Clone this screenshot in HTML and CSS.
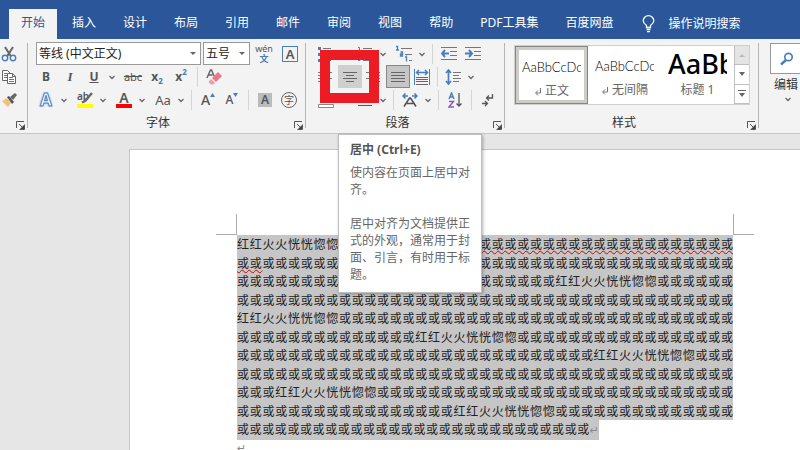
FILE: index.html
```
<!DOCTYPE html>
<html lang="zh-CN">
<head>
    <meta charset="UTF-8">
    <meta name="viewport" content="width=device-width, initial-scale=1.0">
    <title>文档</title>
    <link rel="stylesheet" href="styles.css">
</head>
<body>
<svg class="defs" aria-hidden="true">
    <symbol id="chev" viewBox="0 0 12 12"><path d="M3.500 5L6 7.500 8.500 5" fill="none" stroke="#666" stroke-width="1.300"/></symbol>
    <symbol id="launch" viewBox="0 0 9 9"><path d="M.5 7V.5H8M3 3l4 4M8.500 3.500v5h-5" fill="none" stroke="#555"/><path d="M8 4v4H4z" fill="#444"/></symbol>
    <symbol id="enter" viewBox="0 0 8 9"><path d="M6.500 1v5H2M4 3.500L1.500 6 4 8.500" fill="none" stroke="#777"/></symbol>
</svg>

<nav class="tabs">
    <a href="#" class="tab active">开始</a>
    <a href="#" class="tab">插入</a>
    <a href="#" class="tab">设计</a>
    <a href="#" class="tab">布局</a>
    <a href="#" class="tab">引用</a>
    <a href="#" class="tab">邮件</a>
    <a href="#" class="tab">审阅</a>
    <a href="#" class="tab">视图</a>
    <a href="#" class="tab">帮助</a>
    <a href="#" class="tab">PDF工具集</a>
    <a href="#" class="tab">百度网盘</a>
    <a href="#" class="tab search">
        <svg width="13" height="18" viewBox="0 0 13 18" fill="none" stroke="#fff" stroke-width="1.3"><path d="M4.500 12.500v-2C2.500 9 1.200 7.800 1.200 5.700a5.300 5 0 0 1 10.600 0c0 2.100-1.300 3.300-3.300 4.800v2zM4.500 14.500h4M5 16.700h3"/></svg>
        操作说明搜索
    </a>
</nav>

<div class="ribbon">
    <section class="group clipboard">
        <div class="row"><button class="btn narrow" aria-label="剪切"><svg width="16" height="16" viewBox="0 0 16 16" fill="none"><path d="M4 1l6 9.500M12 1L6 10.500" stroke="#666" stroke-width="2"/><circle cx="4" cy="12" r="2.700" stroke="#4a7ebb" stroke-width="1.400"/><circle cx="12" cy="12" r="2.700" stroke="#4a7ebb" stroke-width="1.400"/></svg></button></div>
        <div class="row"><button class="btn narrow" aria-label="复制"><svg width="16" height="16" viewBox="0 0 16 16" fill="#fff" stroke="#666"><path d="M1.500 1.500h5l3 3v7h-8z"/><path d="M3 4.500h3M3 6.500h3M3 8.500h3" stroke="#4a7ebb"/><path d="M6.500 4.500h5l3 3v7h-8z"/><path d="M11.500 4.500v3h3" fill="none"/><path d="M8 8.500h4M8 10.500h5M8 12.500h5" stroke="#4a7ebb"/></svg></button></div>
        <div class="row"><button class="btn narrow" aria-label="格式刷"><svg width="16" height="16" viewBox="0 0 16 16"><path d="M1 9l5-3 4 5-3 4z" fill="#edc180"/><path d="M6 5l2-1 5 6-2 2z" fill="#555"/><path d="M9 5l5-4 2 2-4 5z" fill="#666"/></svg></button></div>
        <div class="foot"><span></span><button class="launch" aria-label="剪贴板选项"><svg width="9" height="9"><use href="#launch"/></svg></button></div>
    </section>

    <section class="group font">
        <div class="row fields">
            <div class="combo family"><select aria-label="字体"><option>等线 (中文正文)</option></select></div>
            <div class="combo size"><select aria-label="字号"><option>五号</option></select></div>
            <button class="btn pinyin" aria-label="拼音指南"><span>wén</span><b>文</b></button>
            <button class="btn" aria-label="字符边框"><span class="boxed">A</span></button>
        </div>
        <div class="row">
            <div class="set">
                <button class="btn bold">B</button>
                <button class="btn italic">I</button>
                <button class="btn under">U</button>
                <button class="more" aria-label="下划线样式"><svg width="12" height="12"><use href="#chev"/></svg></button>
            </div>
            <div class="set">
                <button class="btn strike">abc</button>
                <button class="btn script">x<sub>2</sub></button>
                <button class="btn script">x<sup>2</sup></button>
            </div>
            <i class="sep"></i>
            <button class="btn" aria-label="清除格式"><svg width="16" height="16" viewBox="0 0 16 16"><path d="M1 9L4.500 1h1L8 7M2.500 6h4" fill="none" stroke="#666" stroke-width="1.500"/><path d="M6 9l6-6 4 4-6 6z" fill="#e8798b"/><path d="M5 10l4 4-2 1.500H5L2.500 13z" fill="#eb9aa7"/></svg></button>
        </div>
        <div class="row">
            <div class="set">
                <button class="btn effect">A</button>
                <button class="more" aria-label="文本效果"><svg width="12" height="12"><use href="#chev"/></svg></button>
            </div>
            <div class="set">
                <button class="btn marker" aria-label="突出显示"><svg width="18" height="18" viewBox="0 0 18 18"><text x="1" y="9" class="ab">ab</text><path d="M16 2l-7 8-3 1.500" fill="none" stroke="#666" stroke-width="2.400"/><path d="M1 13h16v4H1z" fill="#ff0"/></svg></button>
                <button class="more" aria-label="突出显示颜色"><svg width="12" height="12"><use href="#chev"/></svg></button>
            </div>
            <div class="set">
                <button class="btn" aria-label="字体颜色"><span class="colour">A</span></button>
                <button class="more" aria-label="选择字体颜色"><svg width="12" height="12"><use href="#chev"/></svg></button>
            </div>
            <div class="set">
                <button class="btn case">Aa</button>
                <button class="more" aria-label="更改大小写"><svg width="12" height="12"><use href="#chev"/></svg></button>
            </div>
            <i class="sep"></i>
            <div class="set">
                <button class="btn grow">A<svg width="5" height="4" viewBox="0 0 5 4"><path d="M0 4l2.500-4L5 4z" fill="#4a7ebb"/></svg></button>
                <button class="btn shrink">A<svg width="5" height="4" viewBox="0 0 5 4"><path d="M0 0h5L2.500 4z" fill="#4a7ebb"/></svg></button>
            </div>
            <i class="sep"></i>
            <div class="set">
                <button class="btn" aria-label="字符底纹"><span class="shaded">A</span></button>
                <button class="btn" aria-label="带圈字符"><span class="circled">字</span></button>
            </div>
        </div>
        <div class="foot"><span>字体</span><button class="launch" aria-label="字体选项"><svg width="9" height="9"><use href="#launch"/></svg></button></div>
    </section>

    <section class="group para">
        <div class="row">
            <div class="set">
                <button class="btn" aria-label="项目符号"><svg width="16" height="16" viewBox="0 0 16 16"><path d="M0 1h3v3H0zM0 7h3v3H0zM0 13h3v3H0z" fill="#4a7ebb"/><path d="M5 2.500h8M5 8.500h8M5 14.500h8" stroke="#777"/></svg></button>
                <button class="more" aria-label="项目符号库"><svg width="12" height="12"><use href="#chev"/></svg></button>
            </div>
            <div class="set">
                <button class="btn" aria-label="编号"><svg width="16" height="16" viewBox="0 0 16 16"><path d="M1 1.500h1.500V5M1 5h3M1 12.500h2v2H1" fill="none" stroke="#4a7ebb"/><path d="M6 2.500h9M6 8.500h9M6 14.500h9" stroke="#777"/></svg></button>
                <button class="more" aria-label="编号库"><svg width="12" height="12"><use href="#chev"/></svg></button>
            </div>
            <div class="set">
                <button class="btn" aria-label="多级列表"><svg width="18" height="18" viewBox="0 0 18 18"><path d="M1 1.500h1.500V5M1 5h3M5.500 7h2v4h-2V9h2M10 12h1.500v4.500M11.500 9.500v1" fill="none" stroke="#4a7ebb" stroke-width="1.300"/><path d="M6 3.500h11M10 9.500h7M14 15.500h3" stroke="#777"/></svg></button>
                <button class="more" aria-label="列表库"><svg width="12" height="12"><use href="#chev"/></svg></button>
            </div>
            <i class="sep"></i>
            <div class="set">
                <button class="btn" aria-label="减少缩进"><svg width="16" height="14" viewBox="0 0 16 14"><path d="M0 .5h16M9 4.500h7M9 8.500h7M0 12.500h16" stroke="#777"/><path d="M1 6.500h7M4 3L1 6.500 4 10" fill="none" stroke="#4a7ebb" stroke-width="2"/></svg></button>
                <button class="btn" aria-label="增加缩进"><svg width="16" height="14" viewBox="0 0 16 14"><path d="M0 .5h16M9 4.500h7M9 8.500h7M0 12.500h16" stroke="#777"/><path d="M0 6.500h7M4 3l3 3.500L4 10" fill="none" stroke="#4a7ebb" stroke-width="2"/></svg></button>
            </div>
        </div>
        <div class="row">
            <div class="set">
                <button class="btn" aria-label="左对齐"><svg width="16" height="12" viewBox="0 0 16 12" stroke="#777"><path d="M0 1.500h14M0 4.500h9M0 7.500h14M0 10.500h9"/></svg></button>
                <button class="btn hover" aria-label="居中"><svg width="16" height="12" viewBox="0 0 16 12" stroke="#666"><path d="M1 1.500h14M4 4.500h8M1 7.500h14M4 10.500h8"/></svg></button>
                <button class="btn" aria-label="右对齐"><svg width="16" height="12" viewBox="0 0 16 12" stroke="#777"><path d="M0 1.500h14M5 4.500h9M0 7.500h14M5 10.500h9"/></svg></button>
                <button class="btn pressed" aria-label="两端对齐"><svg width="16" height="12" viewBox="0 0 16 12" stroke="#666"><path d="M1 1.500h14M1 4.500h14M1 7.500h14M1 10.500h14"/></svg></button>
                <button class="btn" aria-label="分散对齐"><svg width="16" height="16" viewBox="0 0 16 16" fill="none"><path d="M.5 0v16M15.500 0v16" stroke="#4a7ebb"/><path d="M3 3.500h10M5 1L2.500 3.500 5 6M11 1l2.500 2.500L11 6" stroke="#4a7ebb" stroke-width="1.500"/><path d="M2 8.500h12M2 10.500h12M2 12.500h12M2 15.500h12" stroke="#666"/></svg></button>
            </div>
            <i class="sep tight"></i>
            <div class="set">
                <button class="btn" aria-label="行距"><svg width="16" height="16" viewBox="0 0 16 16" fill="none"><path d="M3.500 1v14M1 4l2.500-3L6 4M1 12l2.500 3L6 12" stroke="#4a7ebb" stroke-width="1.700"/><path d="M8 3.500h8M8 6.500h6M8 9.500h8M8 12.500h6" stroke="#777"/></svg></button>
                <button class="more" aria-label="行距选项"><svg width="12" height="12"><use href="#chev"/></svg></button>
            </div>
        </div>
        <div class="row">
            <div class="set">
                <button class="btn" aria-label="底纹"><svg width="16" height="16" viewBox="0 0 16 16"><path d="M3 8l5-6 5 6z" fill="#777"/><path d="M.5 12.500h15v3H.5z" fill="#fff" stroke="#888"/></svg></button>
                <button class="more" aria-label="底纹颜色"><svg width="12" height="12"><use href="#chev"/></svg></button>
            </div>
            <div class="set">
                <button class="btn" aria-label="边框"><svg width="14" height="14" viewBox="0 0 14 14"><path d="M0 .5h13M0 6.500h13" stroke="#777" stroke-dasharray="1 1"/><path d="M0 12.500h14" stroke="#555"/></svg></button>
                <button class="more" aria-label="边框样式"><svg width="12" height="12"><use href="#chev"/></svg></button>
            </div>
            <i class="sep"></i>
            <div class="set">
                <button class="btn" aria-label="中文版式"><svg width="16" height="14" viewBox="0 0 16 14" fill="none"><path d="M1 3h5M3.500.5L1 3l2.500 2.500M15 3h-5M12.500.5L15 3l-2.500 2.500" stroke="#4a7ebb" stroke-width="1.500"/><path d="M2 13.500L7.500 5h1l5.500 8.500M4.500 10.500h7" stroke="#555" stroke-width="1.600"/></svg></button>
                <button class="more" aria-label="中文版式选项"><svg width="12" height="12"><use href="#chev"/></svg></button>
            </div>
            <i class="sep"></i>
            <button class="btn" aria-label="排序"><svg width="14" height="16" viewBox="0 0 14 16" fill="none"><path d="M1 7l2.500-6L6 7M2 5h3" stroke="#4a7ebb" stroke-width="1.400"/><path d="M1 9.500h4.500L1 15h5" stroke="#8c5bb5" stroke-width="1.400"/><path d="M11 1v13M8.500 11.500L11 14l2.500-2.500" stroke="#555" stroke-width="1.300"/></svg></button>
            <i class="sep"></i>
            <button class="btn" aria-label="显示编辑标记"><svg width="12" height="14" viewBox="0 0 12 14" fill="none" stroke="#555" stroke-width="1.300"><path d="M10.500 1v4H5M7 2.500L4.500 5 7 7.500M0 10.500h5M3 8l2.500 2.500L3 13"/></svg></button>
        </div>
        <div class="foot"><span>段落</span><button class="launch" aria-label="段落选项"><svg width="9" height="9"><use href="#launch"/></svg></button></div>
        <div class="mark"></div>
        <div class="tip" role="tooltip">
            <b>居中 (Ctrl+E)</b>
            <p>使内容在页面上居中对齐。</p>
            <p>居中对齐为文档提供正式的外观，通常用于封面、引言，有时用于标题。</p>
        </div>
    </section>

    <section class="group styles">
        <div class="gallery">
            <button class="style chosen"><span class="sample">AaBbCcDc</span><span class="name"><svg width="8" height="9"><use href="#enter"/></svg>正文</span></button>
            <button class="style"><span class="sample">AaBbCcDc</span><span class="name"><svg width="8" height="9"><use href="#enter"/></svg>无间隔</span></button>
            <button class="style"><span class="sample big">AaBb</span><span class="name">标题 1</span></button>
            <div class="scroll">
                <button disabled aria-label="上一行"><svg width="6" height="4" viewBox="0 0 6 4"><path d="M0 4l3-3 3 3z" fill="#bbb"/></svg></button>
                <button aria-label="下一行"><svg width="6" height="4" viewBox="0 0 6 4"><path d="M0 0h6L3 4z" fill="#666"/></svg></button>
                <button aria-label="其他"><svg width="8" height="8" viewBox="0 0 8 8"><path d="M0 0h8v1H0zM1 3h6L4 7z" fill="#666"/></svg></button>
            </div>
        </div>
        <div class="foot"><span>样式</span><button class="launch" aria-label="样式选项"><svg width="9" height="9"><use href="#launch"/></svg></button></div>
    </section>

    <section class="group edit">
        <button class="find" aria-label="编辑菜单"><svg width="14" height="14" viewBox="0 0 14 14" fill="none" stroke="#4a7ebb"><circle cx="8.500" cy="5" r="3.700" stroke-width="1.700"/><path d="M6 8l-5 4.500" stroke-width="2.400"/></svg></button>
        <span>编辑</span>
        <svg width="12" height="12"><use href="#chev"/></svg>
    </section>
</div>

<main class="desk">
    <article class="page">
        <div class="corners"><i></i><i></i></div>
        <div class="text">
            <p>红红火火恍恍惚惚或或或或或或或或或或或<u>或或或或或或或或或或或或或或或或或或或或</u></p>
            <p><u>或或</u>或或或或或或或或或或或或或或或或或或或或或或或或或或或或或或或或或或或或或</p>
            <p>或或或或或或或或或或或或或或或或或或或或或或或或或红红火火恍恍惚惚或或或或或或</p>
            <p>或或或或或或或或或或或或或或或或或或或或或或或或或或或或或或或或或或或或或或或</p>
            <p>红红火火恍恍惚惚或或或或或或或或或或或或或或或或或或或或或或或或或或或或或或或</p>
            <p>或或或或或或或或或或或或或或红红火火恍恍惚惚或或或或或或或或或或或或或或或或或</p>
            <p>或或或或或或或或或或或或或或或或或或或或或或或或或或或或红红火火恍恍惚惚或或或</p>
            <p>或或或或或或或或或或或或或或或或或或或或或或或或或或或或或或或或或或或或或或或</p>
            <p>或或或红红火火恍恍惚惚或或或或或或或或或或或或或或或或或或或或或或或或或或或或</p>
            <p>或或或或或或或或或或或或或或或或或红红火火恍恍惚惚或或或或或或或或或或或或或或</p>
            <p class="last">或或或或或或或或或或或或或或或或或或或或或或或或或或或或<span class="ret">↵</span></p>
        </div>
        <div class="empty ret">↵</div>
    </article>
</main>
</body>
</html>
```
FILE: styles.css
```
* {
    box-sizing: border-box;
}
body {
    margin: 0;
    height: 100vh;
    overflow: hidden;
    display: flex;
    flex-direction: column;
    font-family: "Noto Sans", "Noto Sans CJK SC", sans-serif;
    font-size: 12px;
    color: #333;
    background-color: #e6e6e6;
}
button {
    font: inherit;
    color: #555;
    background: none;
    border: 0;
    padding: 0;
}
svg {
    display: block;
    flex: none;
}
.defs {
    position: absolute;
    width: 0;
    height: 0;
}

/* tabs */
.tabs {
    display: flex;
    gap: 3px;
    padding: 9px 9px 0;
    background-color: #2b579a;
}
.tab {
    height: 30px;
    line-height: 28px;
    padding: 0 12px;
    color: #fff;
    text-decoration: none;
    white-space: nowrap;
}
.tab.active {
    background-color: #f3f3f3;
    color: #2b579a;
}
.search {
    display: flex;
    align-items: center;
    gap: 13px;
    padding-left: 14px;
}

/* ribbon */
.ribbon {
    display: flex;
    height: 95px;
    background-color: #f3f3f3;
    border-bottom: 1px solid #c8c8c8;
}
.group {
    position: relative;
    flex: none;
    display: flex;
    flex-direction: column;
    padding: 3px 0 0 8px;
}
.group::after {
    content: "";
    position: absolute;
    right: 0;
    top: 4px;
    bottom: 5px;
    width: 1px;
    background-color: #b5b5b5;
}
.clipboard {
    width: 28px;
    padding-left: 0;
}
.font {
    width: 278px;
    padding-left: 6px;
}
.para {
    width: 199px;
}
.styles {
    width: 254px;
}
.row {
    display: flex;
    align-items: center;
    gap: 3px;
    height: 23px;
}
.fields {
    gap: 2px;
    padding-left: 2px;
}
.set {
    display: flex;
    align-items: center;
}
.btn {
    width: 24px;
    height: 23px;
    flex: none;
    display: flex;
    align-items: center;
    justify-content: center;
    line-height: 16px;
}
.narrow {
    width: 18px;
}
.more {
    width: 12px;
}
.sep {
    width: 1px;
    height: 20px;
    margin: 0 1px;
    background-color: #d4d4d4;
}
.tight {
    margin: 0;
}
.foot {
    display: flex;
    align-items: center;
    height: 22px;
    padding-right: 3px;
}
.foot span {
    flex: 1;
    padding-right: 12px;
    text-align: center;
}
.launch {
    margin-top: 6px;
}
.hover {
    background-color: #cfcfcf;
}
.pressed {
    background-color: #c6c6c6;
    border: 1px solid #888;
}

/* font group */
.combo {
    position: relative;
    height: 23px;
    background-color: #fff;
    border: 1px solid #999;
}
.combo::after {
    content: "";
    position: absolute;
    right: 4px;
    top: 9px;
    border: 3px solid transparent;
    border-top-color: #666;
}
.family {
    width: 165px;
}
.size {
    width: 47px;
}
.combo select {
    appearance: none;
    width: 100%;
    height: 21px;
    padding: 0 2px;
    border: 0;
    background: none;
    font: inherit;
    color: #222;
}
.pinyin {
    flex-direction: column;
    font-size: 9px;
    line-height: 10px;
}
.pinyin b {
    color: #4a7ebb;
}
.boxed {
    width: 16px;
    height: 16px;
    border: 1px solid #4a7ebb;
    font-size: 13px;
    font-weight: 600;
    line-height: 14px;
}
.bold {
    font-weight: bold;
}
.italic {
    font-family: "Liberation Serif", serif;
    font-size: 13px;
    font-weight: bold;
    font-style: italic;
}
.under {
    font-weight: bold;
    text-decoration: underline;
}
.strike {
    font-size: 11px;
    text-decoration: line-through;
}
.script {
    font-weight: bold;
}
.script sub,
.script sup {
    font-size: 8px;
    line-height: 8px;
    color: #4a7ebb;
}
.script sub {
    align-self: flex-end;
    padding-bottom: 3px;
}
.script sup {
    align-self: flex-start;
    padding-top: 3px;
}
.effect {
    font-size: 17px;
    font-weight: bold;
    color: #fff;
    -webkit-text-stroke: 1px #4a7ebb;
    text-shadow: 0 0 3px #8db4e2;
}
.ab {
    font-size: 10px;
    font-weight: 600;
    fill: #555;
}
.marker svg {
    overflow: visible;
}
.colour {
    width: 16px;
    height: 16px;
    border-bottom: 4px solid #f00;
    font-size: 14px;
    font-weight: 600;
    line-height: 12px;
}
.case {
    font-size: 13px;
}
.grow,
.shrink {
    font-size: 14px;
    font-weight: 500;
}
.shrink {
    font-size: 12px;
}
.grow svg,
.shrink svg {
    align-self: flex-start;
    margin-top: 5px;
}
.shaded {
    width: 14px;
    height: 14px;
    background-color: #bbb;
    font-weight: 600;
    line-height: 14px;
}
.circled {
    width: 16px;
    height: 16px;
    border: 1px solid #666;
    border-radius: 50%;
    font-size: 10px;
    line-height: 14px;
}

/* red frame and tooltip over the ribbon */
.mark {
    position: absolute;
    left: 14px;
    top: 11px;
    width: 59px;
    height: 53px;
    border: 10px solid #ed1c24;
}
.tip {
    position: absolute;
    z-index: 2;
    left: 32px;
    top: 95px;
    width: 144px;
    padding: 6px 11px 9px;
    background-color: #fff;
    border: 1px solid #bebebe;
    box-shadow: 1px 1px 3px rgba(0, 0, 0, 0.3);
    color: #666;
    line-height: 17px;
}
.tip b {
    color: #555;
}
.tip p {
    margin: 6px 0 17px;
}
.tip p:last-child {
    margin: 0;
}

/* styles gallery */
.gallery {
    display: flex;
    height: 60px;
    margin: 3px 9px 6px 1px;
    background-color: #fff;
    border: 1px solid #d0d0d0;
}
.style {
    flex: 1;
    min-width: 0;
    height: 58px;
    padding: 0 7px;
    display: flex;
    flex-direction: column;
    align-items: center;
}
.chosen {
    border: 1px solid #868686;
    box-shadow: inset 0 0 0 3px #cdcdc8;
    padding: 0 6px;
}
.sample {
    width: 100%;
    height: 36px;
    overflow: hidden;
    font-family: Lato, sans-serif;
    font-size: 13px;
    font-weight: 300;
    line-height: 40px;
    text-align: left;
    white-space: nowrap;
    color: #000;
}
.big {
    font-family: "Noto Sans", sans-serif;
    font-size: 27px;
    font-weight: 500;
    line-height: 36px;
}
.name {
    display: flex;
    align-items: center;
    gap: 3px;
    line-height: 16px;
    color: #666;
}
.scroll {
    width: 15px;
    display: grid;
    grid-template-rows: repeat(3, 1fr);
    border-left: 1px solid #c0c0c0;
}
.scroll button {
    display: grid;
    place-items: center;
    border-bottom: 1px solid #c0c0c0;
}
.scroll button:disabled {
    background-color: #e4e4e4;
}

/* editing group */
.edit {
    width: 60px;
    padding: 4px 0 0 11px;
}
.edit::after {
    content: none;
}
.find {
    height: 31px;
    padding-left: 9px;
    background-color: #fff;
    border: 1px solid #999;
}
.edit span {
    margin: 2px 4px 0;
    line-height: 17px;
}
.edit > svg {
    margin-left: 12px;
}

/* document */
.desk {
    flex: 1;
    min-height: 0;
    padding: 15px 0 0 129px;
}
.page {
    height: 100%;
    padding: 64px 46px 0 86px;
    background-color: #fff;
    border: 1px solid #c6c6c6;
    border-width: 1px 0 0 1px;
}
.corners {
    display: flex;
    justify-content: space-between;
    max-width: 538px;
}
.corners i {
    width: 21px;
    height: 21px;
    border: 1px solid #aaa;
    border-width: 0 1px 1px 0;
}
.corners i:last-child {
    border-width: 0 0 1px 1px;
}
.text {
    display: grid;
    grid-template-rows: repeat(11, 1fr);
    height: 205px;
    max-width: 538px;
    padding: 0 21px;
    font-family: "Noto Sans CJK SC", sans-serif;
    color: #222;
}
.text p {
    margin: 0;
    line-height: 18px;
    background-color: #c6c6c6;
    white-space: nowrap;
    text-align: justify;
    text-align-last: justify;
}
.text .last {
    width: 73%;
}
.text u {
    position: relative;
    z-index: 1;
    text-decoration: underline wavy #d00000 1px;
    text-decoration-skip-ink: none;
    text-underline-offset: 1px;
}
.ret {
    font-family: "DejaVu Sans", sans-serif;
    font-size: 11px;
    color: #888;
}
.empty {
    padding-left: 21px;
    line-height: 18px;
}
```
